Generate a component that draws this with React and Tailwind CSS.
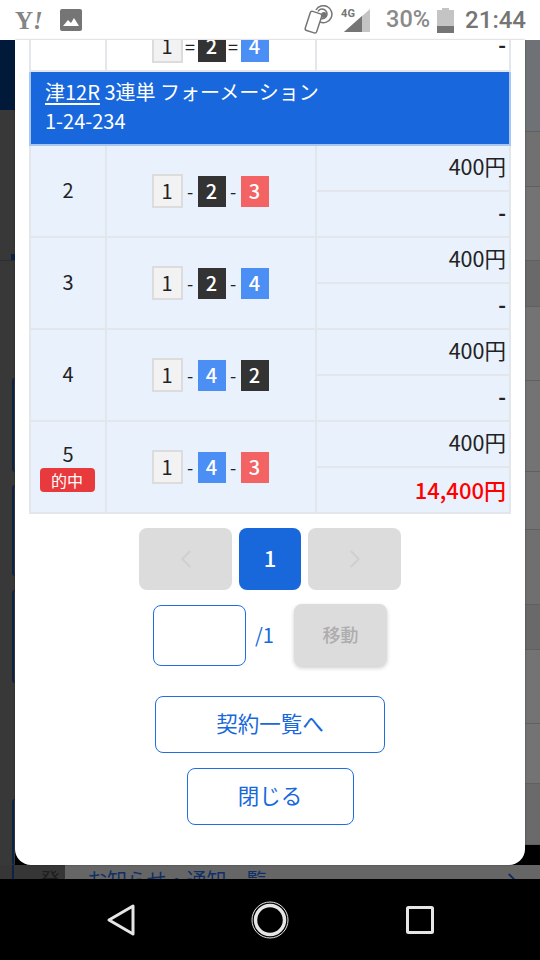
import { ChevronLeft, ChevronRight } from "lucide-react";

const rows = [
  { no: "2", picks: ["1", "2", "3"], pay: "-" },
  { no: "3", picks: ["1", "2", "4"], pay: "-" },
  { no: "4", picks: ["1", "4", "2"], pay: "-" },
  { no: "5", picks: ["1", "4", "3"], pay: "14,400円", hit: true },
];

const rightStripes = [
  { h: "h-[92px]", c: "bg-[#6e7176]" },
  { h: "h-[55px]", c: "bg-[#707070]" },
  { h: "h-[74px]", c: "bg-[#737373]" },
  { h: "h-[46px]", c: "bg-[#696969]" },
  { h: "h-[74px]", c: "bg-[#737373]" },
  { h: "h-[91px]", c: "bg-[#737373]" },
  { h: "h-[58px]", c: "bg-[#737373]" },
  { h: "h-[75px]", c: "bg-[#6f6f6f]" },
  { h: "h-[45px]", c: "bg-[#696969]" },
  { h: "h-[74px]", c: "bg-[#737373]" },
  { h: "h-[60px]", c: "bg-[#737373]" },
  { h: "h-[61px]", c: "bg-[#6a6a6a]" },
];

function Boat({ n }) {
  if (n === "1") {
    return (
      <span className="flex h-[34px] w-[31px] items-center justify-center border-2 border-[#dcdcdc] bg-[#f2f2f2] text-[20px] leading-none text-[#222]">
        1
      </span>
    );
  }
  const color = n === "2" ? "bg-[#333333]" : n === "3" ? "bg-[#f46364]" : "bg-[#4b8ff5]";
  return (
    <span className={`flex h-[31px] w-[28px] items-center justify-center text-[20px] font-medium leading-none text-white ${color}`}>
      {n}
    </span>
  );
}

function Picks({ picks, sep = "-" }) {
  return (
    <div className="flex -translate-x-[1px] items-center justify-center">
      <Boat n={picks[0]} />
      <span className="w-[15px] text-center text-[18px] leading-none text-[#222]">{sep}</span>
      <Boat n={picks[1]} />
      <span className="w-[15px] text-center text-[18px] leading-none text-[#222]">{sep}</span>
      <Boat n={picks[2]} />
    </div>
  );
}

function StatusBar() {
  return (
    <div className="flex h-10 items-center bg-white pl-[15px] pr-[14px] text-[#757575]">
      <span className="w-[45px] font-['Liberation_Serif',serif] text-[25px] font-bold leading-none text-[#858585]">
        Y<span className="italic">!</span>
      </span>
      <svg width="22" height="22" viewBox="0 0 22 22">
        <rect width="22" height="22" rx="2" fill="#757575" />
        <path d="M3 17l5-6 3 3 3-5 5 8z" fill="#fff" />
      </svg>
      <div className="flex-1" />
      <svg width="31" height="30" viewBox="0 0 31 30" fill="none" stroke="#757575" strokeWidth="1.5">
        <rect x="4.5" y="7" width="12" height="20" rx="2" transform="rotate(18 10 17)" />
        <circle cx="21" cy="10" r="2.2" fill="#757575" />
        <path d="M17 17a8.5 8.5 0 1 0-4-12M18 13.5a4.8 4.8 0 1 0-3-7" />
      </svg>
      <div className="relative ml-[6px] h-[26px] w-[31px]">
        <svg width="31" height="26" viewBox="0 0 31 26" className="absolute left-0 top-0">
          <path d="M4 25L30 2v23z" fill="#c4c4c4" />
          <path d="M4 25L22 9v16z" fill="#757575" />
        </svg>
        <span className="absolute left-[1px] top-[1px] font-['Roboto',sans-serif] text-[11px] font-bold leading-none">4G</span>
      </div>
      <span className="ml-[15px] font-['Roboto',sans-serif] text-[23.5px] font-medium leading-none text-[#8a8a8a]">30%</span>
      <svg width="17" height="25" viewBox="0 0 17 25" className="ml-[7px]">
        <path d="M5 0h7v2h5v23H0V2h5z" fill="#c4c4c4" />
        <rect y="18" width="17" height="7" fill="#757575" />
      </svg>
      <span className="ml-[11px] font-['Roboto',sans-serif] text-[24px] font-medium leading-none">21:44</span>
    </div>
  );
}

function Backdrop() {
  return (
    <div className="flex h-full flex-col">
      <div className="flex flex-1 justify-between overflow-hidden">
        <div className="flex w-[15px] flex-col bg-[#383838]">
          <div className="h-[70px] bg-[#021a3a]" />
          <div className="ml-[11px] mt-[144px] h-[6px] bg-[#0c2347]" />
          <div className="h-px bg-[#2e2e2e]" />
          <div className="ml-[12px] mt-[117px] h-[94px] rounded-l-[4px] border-l-2 border-[#0c2347]" />
          <div className="ml-[12px] mt-[13px] h-[91px] rounded-l-[4px] border-l-2 border-[#0c2347]" />
          <div className="ml-[12px] mt-[14px] h-[93px] rounded-l-[4px] border-l-2 border-[#0c2347]" />
          <div className="ml-[12px] mt-[116px] flex-1 rounded-l-[4px] border-l-2 border-[#0c2347]" />
        </div>
        <div className="flex w-[15px] flex-col">
          {rightStripes.map((s, i) => (
            <div key={i} className={`${s.h} ${s.c} border-b border-[#606060]`} />
          ))}
        </div>
      </div>
      <div className="flex h-[14px] overflow-hidden bg-[#666666] font-['Noto_Sans_CJK_JP',sans-serif] text-[20px] leading-[30px]">
        <div className="w-[65px] shrink-0 bg-[#363636] pl-[12px]">
          <div className="h-full border-l-2 border-[#0c2347] pl-[26px] text-[#1e1e1e]">発行</div>
        </div>
        <span className="ml-[22px] flex-1 text-[#0f2f66]">お知らせ・通知一覧</span>
        <ChevronRight size={22} strokeWidth={2} className="mr-[17px] mt-[4px] text-[#0f2f66]" />
      </div>
    </div>
  );
}

function BetTable() {
  const cell = "border-2 border-[#e3e7ec]";
  return (
    <table className="-mt-[20px] ml-[14px] w-[482px] table-fixed border-collapse text-[#222]">
      <colgroup>
        <col className="w-[76px]" />
        <col className="w-[210px]" />
        <col />
      </colgroup>
      <tbody>
        <tr>
          <td className={`${cell} h-[50px]`} />
          <td className={cell}>
            <Picks picks={["1", "2", "4"]} sep="=" />
          </td>
          <td className={`${cell} pb-[2px] pr-[3px] text-right text-[21px] font-bold`}>-</td>
        </tr>
        <tr>
          <td colSpan={3} className="h-[74px] border-2 border-[#a9c6ef] bg-[#1867dc] pb-[4px] pl-[14px] text-[20px] leading-[29px] text-white">
            <div>
              <span className="underline underline-offset-[3px]">津12R</span> 3連単 フォーメーション
            </div>
            <div>1-24-234</div>
          </td>
        </tr>
        {rows.map((r) => [
          <tr key={r.no} className="bg-[#e9f1fd]">
            <td rowSpan={2} className={`${cell} pb-[2px] text-center text-[20px] leading-[30px]`}>
              <div className={r.hit ? "-mt-[2px]" : ""}>{r.no}</div>
              {r.hit && (
                <div className="mx-auto -mt-[1px] flex h-[24px] w-[55px] -translate-x-[1px] items-center justify-center rounded-[4px] bg-[#e83a3c] text-[16px] leading-none text-white">
                  的中
                </div>
              )}
            </td>
            <td rowSpan={2} className={cell}>
              <Picks picks={r.picks} />
            </td>
            <td className={`${cell} h-[46px] pb-[4px] pr-[3px] text-right text-[21.5px] leading-none`}>400円</td>
          </tr>,
          <tr key={r.no + "b"} className="bg-[#e9f1fd]">
            <td className={`${cell} h-[46px] pb-[3px] pr-[3px] text-right leading-none ${r.hit ? "text-[22px] font-medium text-[#ff0000]" : "text-[21px] font-bold"}`}>
              {r.pay}
            </td>
          </tr>,
        ])}
      </tbody>
    </table>
  );
}

function Modal() {
  return (
    <div className="absolute left-[15px] top-0 flex h-[825px] w-[510px] flex-col overflow-hidden rounded-b-[16px] bg-white font-['Noto_Sans_CJK_JP',sans-serif] shadow-[0_0_2px_rgba(0,0,0,0.4)]">
      <BetTable />
      <div className="mt-[14px] flex justify-center gap-[7px]">
        <div className="flex h-[62px] w-[93px] items-center justify-center rounded-[8px] bg-[#dcdcdc]">
          <ChevronLeft size={30} strokeWidth={1.5} className="text-[#cfcfcf]" />
        </div>
        <div className="flex h-[62px] w-[62px] items-center justify-center rounded-[8px] bg-[#1868db] pb-[4px] text-[22px] font-medium text-white">1</div>
        <div className="flex h-[62px] w-[93px] items-center justify-center rounded-[8px] bg-[#dcdcdc]">
          <ChevronRight size={30} strokeWidth={1.5} className="text-[#cfcfcf]" />
        </div>
      </div>
      <div className="ml-[138px] mt-[14px] flex items-center">
        <div className="h-[61px] w-[93px] rounded-[8px] border-[1.5px] border-[#1f6fe0]" />
        <span className="ml-[9px] text-[20px] text-[#1868db]">/1</span>
        <div className="ml-[20px] flex h-[62px] w-[93px] items-center justify-center rounded-[8px] bg-[#dcdcdc] pb-[2px] text-[18px] font-medium text-[#adadad] shadow-[0_2px_4px_rgba(0,0,0,0.2)]">
          移動
        </div>
      </div>
      <button className="mx-auto mt-[30px] h-[57px] w-[230px] rounded-[8px] border-[1.5px] border-[#1f6fe0] pb-[3px] text-[21.5px] text-[#1868db]">
        契約一覧へ
      </button>
      <button className="mx-auto mt-[15px] h-[57px] w-[167px] rounded-[8px] border-[1.5px] border-[#1f6fe0] pb-[3px] text-[21.5px] text-[#1868db]">
        閉じる
      </button>
    </div>
  );
}

function NavBar() {
  return (
    <div className="flex h-[81px] items-center justify-center bg-black">
      <svg width="30" height="34" viewBox="0 0 30 34" fill="none" stroke="#e6e6e6" strokeWidth="3" strokeLinejoin="round">
        <path d="M27 3v28L3 17z" />
      </svg>
      <svg width="38" height="38" viewBox="0 0 38 38" fill="none" stroke="#e6e6e6" className="ml-[115px]">
        <circle cx="19" cy="19" r="14.5" strokeWidth="3.5" />
        <circle cx="19" cy="19" r="18" strokeWidth="1" />
      </svg>
      <svg width="28" height="28" viewBox="0 0 28 28" fill="none" stroke="#e6e6e6" strokeWidth="3" strokeLinejoin="round" className="ml-[117px]">
        <rect x="1.5" y="1.5" width="25" height="25" rx="1" />
      </svg>
    </div>
  );
}

export default function App() {
  return (
    <div className="flex h-[960px] w-[540px] flex-col overflow-hidden bg-black">
      <StatusBar />
      <div className="relative h-[839px]">
        <Backdrop />
        <Modal />
      </div>
      <NavBar />
    </div>
  );
}
